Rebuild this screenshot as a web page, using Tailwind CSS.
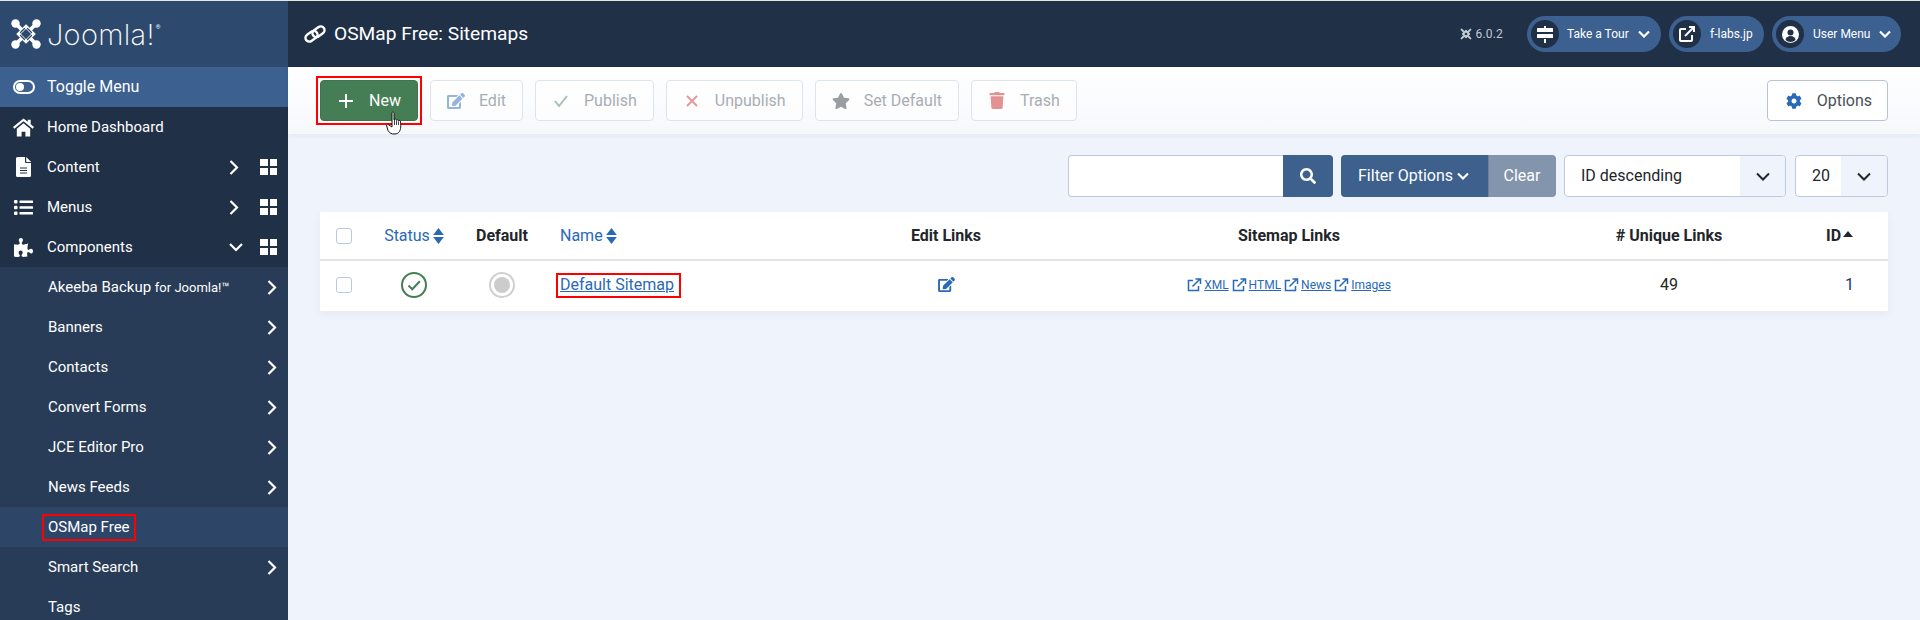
<!DOCTYPE html>
<html lang="en">
 <head>
  <meta charset="utf-8"/>
  <title>OSMap Free: Sitemaps</title>
  <script src="https://cdn.jsdelivr.net/npm/@tailwindcss/browser@4"></script>
 </head>
 <body class="font-[Roboto] bg-[#eff4fc] text-[#22262a] text-base overflow-hidden">
  <div class="h-px bg-[#e6e6dc]"></div>
  <div class="flex h-[619px] overflow-hidden">
   <!-- sidebar -->
   <aside class="w-[288px] shrink-0 flex flex-col bg-[#1f3047] text-white text-[15px] overflow-hidden">
    <div class="h-[66px] shrink-0 bg-[#2d4a6e] flex items-center pl-[11px] gap-[6px]">
     <svg class="w-[30px] h-[30px]" viewBox="0 0 30 30" fill="none" stroke-linecap="round">
      <path d="M15 7.500 22.500 15 15 22.500 7.500 15z" stroke="#fff" stroke-width="3.200"/>
      <g stroke="#fff" stroke-width="3.600"><path d="M5 5 11 11M25 5 19 11M5 25 11 19M25 25 19 19"/></g>
      <g stroke="#2d4a6e" stroke-width="1.300"><path d="M9.500 13.500 13.500 9.500M16.500 20.500 20.500 16.500M16.500 9.500 20.500 13.500M9.500 16.500 13.500 20.500"/></g>
      <g fill="#fff"><circle cx="4.500" cy="4.500" r="4.200"/><circle cx="25.500" cy="4.500" r="4.200"/><circle cx="4.500" cy="25.500" r="4.200"/><circle cx="25.500" cy="25.500" r="4.200"/></g>
     </svg>
     <span class="font-[Inter] font-extralight text-[29px] tracking-[0.3px] leading-none">Joomla!</span>
     <span class="text-[6px] -mt-4 -ml-[5px]">®</span>
    </div>
    <div class="h-10 shrink-0 bg-[#3c6090] flex items-center pl-[13px] text-base">
     <svg class="w-[22px] h-[14px]" viewBox="0 0 22 14"><rect x="1" y="1" width="20" height="12" rx="6" fill="none" stroke="#fff" stroke-width="2"/><circle cx="7" cy="7" r="4" fill="#fff"/></svg>
     <span class="ml-3">Toggle Menu</span>
    </div>
    <div class="h-10 shrink-0 flex items-center pl-[13px]">
     <svg class="w-[21px] h-[19px]" viewBox="0 0 22 19" fill="#fff"><path d="M11 0 0 9l1.400 1.800L11 3l9.600 7.800L22 9l-3.500-2.900V1.500h-3v2.100z"/><path d="M11 5 4 10.700V19h5v-5h4v5h5v-8.300z"/></svg>
     <span class="ml-[13px]">Home Dashboard</span>
    </div>
    <div class="h-10 shrink-0 flex items-center pl-[16px]">
     <svg class="w-[15px] h-[20px]" viewBox="0 0 15 20"><path d="M2 0h7v5a1 1 0 0 0 1 1h5v12.500a1.500 1.500 0 0 1-1.500 1.500h-12A1.500 1.500 0 0 1 0 18.500v-17A1.500 1.500 0 0 1 1.500 0zM10.200 0 15 4.800V5h-4.800z" fill="#fff"/><path d="M4 11h7M4 13.500h7M4 16h7" stroke="#1f3047" stroke-width="1"/></svg>
     <span class="ml-[16px]">Content</span>
     <svg class="w-[10px] h-[15px] ml-auto" viewBox="0 0 10 15" fill="none" stroke="#fff" stroke-width="2.200"><path d="M1.500 1l6.500 6.500-6.500 6.500"/></svg>
     <div class="grid grid-cols-2 gap-[2px] w-[17px] ml-[21px] mr-[11px]"><i class="h-[7px] bg-white"></i><i class="h-[7px] bg-white"></i><i class="h-[7px] bg-white"></i><i class="h-[7px] bg-white"></i></div>
    </div>
    <div class="h-10 shrink-0 flex items-center pl-[14px]">
     <svg class="w-[19px] h-[15px]" viewBox="0 0 19 15" fill="#fff"><rect x="0" y="0" width="3.500" height="3.500" rx="1"/><rect x="0" y="5.700" width="3.500" height="3.500" rx="1"/><rect x="0" y="11.400" width="3.500" height="3.500" rx="1"/><rect x="5.500" y="0.500" width="13.500" height="2.500" rx=".5"/><rect x="5.500" y="6.200" width="13.500" height="2.500" rx=".5"/><rect x="5.500" y="11.900" width="13.500" height="2.500" rx=".5"/></svg>
     <span class="ml-[14px]">Menus</span>
     <svg class="w-[10px] h-[15px] ml-auto" viewBox="0 0 10 15" fill="none" stroke="#fff" stroke-width="2.200"><path d="M1.500 1l6.500 6.500-6.500 6.500"/></svg>
     <div class="grid grid-cols-2 gap-[2px] w-[17px] ml-[21px] mr-[11px]"><i class="h-[7px] bg-white"></i><i class="h-[7px] bg-white"></i><i class="h-[7px] bg-white"></i><i class="h-[7px] bg-white"></i></div>
    </div>
    <div class="h-10 shrink-0 flex items-center pl-[14px]">
     <svg class="w-[19px] h-[19px]" viewBox="0 0 576 512" preserveAspectRatio="none" fill="#fff"><path d="M519.442 288.651c-41.519 0-59.5 31.593-82.058 31.593C377.409 320.244 432 144 432 144s-196.288 80-196.288-3.297c0-35.827 36.288-46.25 36.288-85.985C272 19.216 243.885 0 210.539 0c-34.654 0-66.366 18.891-66.366 56.346 0 41.364 31.711 59.277 31.711 81.75C175.885 207.719 0 166.758 0 166.758v333.237s178.635 41.047 178.635-28.662c0-22.473-40-40.107-40-81.471 0-37.456 29.25-56.346 63.577-56.346 33.673 0 61.788 19.216 61.788 54.717 0 39.735-36.288 50.158-36.288 85.985 0 60.803 129.675 25.73 181.23 25.73 0 0-34.725-120.101 25.827-120.101 35.962 0 46.423 36.152 86.308 36.152C556.712 416 576 387.99 576 354.443c0-34.199-18.962-65.792-56.558-65.792z"/></svg>
     <span class="ml-[14px]">Components</span>
     <svg class="w-[14px] h-[10px] ml-auto" viewBox="0 0 14 10" fill="none" stroke="#fff" stroke-width="2.200"><path d="M1 2l6 6 6-6"/></svg>
     <div class="grid grid-cols-2 gap-[2px] w-[17px] ml-[17px] mr-[11px]"><i class="h-[7px] bg-white"></i><i class="h-[7px] bg-white"></i><i class="h-[7px] bg-white"></i><i class="h-[7px] bg-white"></i></div>
    </div>
    <!-- submenu -->
    <div class="flex-1 bg-[#283c57] flex flex-col">
     <div class="h-10 shrink-0 flex items-center pl-[48px] pr-[11px]"><span>Akeeba Backup <span class="text-[13px]">for Joomla!™</span></span><svg class="w-[10px] h-[15px] ml-auto" viewBox="0 0 10 15" fill="none" stroke="#fff" stroke-width="2.200"><path d="M1.500 1l6.500 6.500-6.500 6.500"/></svg></div>
     <div class="h-10 shrink-0 flex items-center pl-[48px] pr-[11px]"><span>Banners</span><svg class="w-[10px] h-[15px] ml-auto" viewBox="0 0 10 15" fill="none" stroke="#fff" stroke-width="2.200"><path d="M1.500 1l6.500 6.500-6.500 6.500"/></svg></div>
     <div class="h-10 shrink-0 flex items-center pl-[48px] pr-[11px]"><span>Contacts</span><svg class="w-[10px] h-[15px] ml-auto" viewBox="0 0 10 15" fill="none" stroke="#fff" stroke-width="2.200"><path d="M1.500 1l6.500 6.500-6.500 6.500"/></svg></div>
     <div class="h-10 shrink-0 flex items-center pl-[48px] pr-[11px]"><span>Convert Forms</span><svg class="w-[10px] h-[15px] ml-auto" viewBox="0 0 10 15" fill="none" stroke="#fff" stroke-width="2.200"><path d="M1.500 1l6.500 6.500-6.500 6.500"/></svg></div>
     <div class="h-10 shrink-0 flex items-center pl-[48px] pr-[11px]"><span>JCE Editor Pro</span><svg class="w-[10px] h-[15px] ml-auto" viewBox="0 0 10 15" fill="none" stroke="#fff" stroke-width="2.200"><path d="M1.500 1l6.500 6.500-6.500 6.500"/></svg></div>
     <div class="h-10 shrink-0 flex items-center pl-[48px] pr-[11px]"><span>News Feeds</span><svg class="w-[10px] h-[15px] ml-auto" viewBox="0 0 10 15" fill="none" stroke="#fff" stroke-width="2.200"><path d="M1.500 1l6.500 6.500-6.500 6.500"/></svg></div>
     <div class="h-10 shrink-0 flex items-center pl-[42px] bg-[#2d4668]"><span class="border-2 border-[#f00] h-[27px] w-[94px] pl-[4px] flex items-center whitespace-nowrap">OSMap Free</span></div>
     <div class="h-10 shrink-0 flex items-center pl-[48px] pr-[11px]"><span>Smart Search</span><svg class="w-[10px] h-[15px] ml-auto" viewBox="0 0 10 15" fill="none" stroke="#fff" stroke-width="2.200"><path d="M1.500 1l6.500 6.500-6.500 6.500"/></svg></div>
     <div class="h-10 shrink-0 flex items-center pl-[48px]"><span>Tags</span></div>
    </div>
   </aside>

   <main class="flex-1 flex flex-col min-w-0">
    <!-- header -->
    <header class="h-[66px] shrink-0 bg-[#1f3047] text-white flex items-center pl-[16px] pr-[19px]">
     <svg class="w-[22px] h-[18px]" viewBox="0 0 22 18" fill="none" stroke="#fff" stroke-width="2.400">
      <rect x="1" y="7.500" width="13" height="7.500" rx="3.750" transform="rotate(-35 7.500 11.250)"/>
      <rect x="8" y="3" width="13" height="7.500" rx="3.750" transform="rotate(-35 14.500 6.750)"/>
     </svg>
     <h1 class="ml-[8px] text-[19.2px] leading-none">OSMap Free: Sitemaps</h1>
     <div class="ml-auto flex items-center text-xs text-[#c3cad4]">
      <svg class="w-[12px] h-[12px] mr-[3px]" viewBox="0 0 30 30" fill="none" stroke="#c3cad4" stroke-width="5" stroke-linecap="round"><path d="M15 7.500 22.500 15 15 22.500 7.500 15zM4 4 11 11M26 4 19 11M4 26 11 19M26 26 19 19"/></svg>
      <span class="tracking-[0.2px]">6.0.2</span>
     </div>
     <div class="ml-[24px] h-9 w-[134px] rounded-full bg-[#3c6090] flex items-center pl-[4px] text-xs">
      <span class="w-7 h-7 rounded-full bg-[#1f3047] flex items-center justify-center">
       <svg class="w-[16px] h-[17px]" viewBox="0 0 16 17" fill="#fff"><rect x="0" y="2" width="16" height="4" rx=".5"/><rect x="0" y="8" width="16" height="4" rx=".5"/><rect x="7" y="0" width="2" height="2"/><rect x="7" y="13" width="2" height="4"/></svg>
      </span>
      <span class="ml-[8px]">Take a Tour</span>
      <svg class="w-[12px] h-[8px] ml-[9px]" viewBox="0 0 12 8" fill="none" stroke="#fff" stroke-width="2.200"><path d="M1 1.500l5 5 5-5"/></svg>
     </div>
     <div class="ml-[8px] h-9 w-[95px] rounded-full bg-[#3c6090] flex items-center pl-[4px] text-xs">
      <span class="w-7 h-7 rounded-full bg-[#1f3047] flex items-center justify-center">
       <svg class="w-[16px] h-[16px]" viewBox="0 0 16 16" fill="none" stroke="#fff" stroke-width="2"><path d="M7 3H2a1 1 0 0 0-1 1v10a1 1 0 0 0 1 1h10a1 1 0 0 0 1-1V9"/><path d="M6 10 14.500 1.500"/><path d="M10 1h5v5" stroke-width="2"/></svg>
      </span>
      <span class="ml-[9px]">f-labs.jp</span>
     </div>
     <div class="ml-[8px] h-9 w-[129px] rounded-full bg-[#3c6090] flex items-center pl-[4px] text-xs">
      <span class="w-7 h-7 rounded-full bg-[#1f3047] flex items-center justify-center">
       <svg class="w-[17px] h-[17px]" viewBox="0 0 17 17"><circle cx="8.500" cy="8.500" r="8.500" fill="#fff"/><circle cx="8.500" cy="6.500" r="3" fill="#1f3047"/><path d="M3.500 14a5 4 0 0 1 10 0 7 7 0 0 1-10 0z" fill="#1f3047"/></svg>
      </span>
      <span class="ml-[9px]">User Menu</span>
      <svg class="w-[12px] h-[8px] ml-[9px]" viewBox="0 0 12 8" fill="none" stroke="#fff" stroke-width="2.200"><path d="M1 1.500l5 5 5-5"/></svg>
     </div>
    </header>

    <!-- toolbar -->
    <div class="h-[67px] shrink-0 bg-gradient-to-b from-white to-[#f6f8fc] shadow-[0_2px_4px_rgba(31,48,71,0.06)] flex items-center gap-[12px] pl-[32px] pr-[32px] relative">
     <div class="relative">
      <div class="-m-[4px] p-[2px] border-2 border-[#f00]">
       <button class="h-[41px] rounded-[4px] bg-[#457d54] border border-[#3f734d] text-white flex items-center gap-[14px] px-[16px]">
        <svg class="w-[18px] h-[18px]" viewBox="0 0 18 18" fill="none" stroke="#fff" stroke-width="2"><path d="M9 2v14M2 9h14"/></svg>
        <span>New</span>
       </button>
      </div>
      <!-- mouse pointer -->
      <svg class="absolute left-[66px] top-[31px] w-[18px] h-[24px]" viewBox="0 0 18 24" fill="#fff" stroke="#111" stroke-width="1" stroke-linejoin="round"><path d="M6 1.500c.8-.8 2-.5 2 1V9l.5-.5c.8-.8 2-.3 2 .7.500-.8 2-.5 2 .6.500-.7 2-.3 2 .8.200 3 .5 5 0 7-.500 2.500-1.500 5-5.500 5.400-3.500.3-5.500-1-7-3.500L.7 15c-.6-1 .4-2.200 1.500-1.500L6 16z"/><path d="M8.500 9v5M10.500 9.500v4.500M12.500 10.500v3.500" stroke-width=".8"/></svg>
     </div>
     <button class="h-[41px] rounded-[4px] bg-white/60 border border-[#dfe4ec] text-[#a9adb3] flex items-center gap-[14px] px-[16px]">
      <svg class="w-[18px] h-[16px]" viewBox="0 0 576 512" fill="#94b4de"><path d="M402.600 83.200l90.200 90.200c3.800 3.800 3.800 10 0 13.800L274.400 405.600l-92.800 10.300c-12.400 1.400-22.900-9.100-21.500-21.500l10.300-92.800L388.800 83.200c3.800-3.800 10-3.800 13.800 0zm162-22.900l-48.800-48.800c-15.200-15.200-39.900-15.200-55.200 0l-35.400 35.400c-3.800 3.800-3.800 10 0 13.800l90.200 90.200c3.800 3.800 10 3.800 13.800 0l35.400-35.400c15.200-15.300 15.200-40 0-55.200zM384 346.200V448H64V128h229.800c3.200 0 6.200-1.300 8.500-3.500l40-40c7.600-7.600 2.200-20.500-8.500-20.500H48C21.500 64 0 85.500 0 112v352c0 26.500 21.500 48 48 48h352c26.500 0 48-21.500 48-48V306.200c0-10.700-12.900-16-20.500-8.500l-40 40c-2.200 2.300-3.500 5.300-3.500 8.500z"/></svg>
      <span>Edit</span>
     </button>
     <button class="h-[41px] rounded-[4px] bg-white/60 border border-[#dfe4ec] text-[#a9adb3] flex items-center gap-[14px] px-[16px]">
      <svg class="w-[18px] h-[14px]" viewBox="0 0 18 14" fill="none" stroke="#a5c2ad" stroke-width="2"><path d="M3 7l4 5 8-10"/></svg>
      <span>Publish</span>
     </button>
     <button class="h-[41px] rounded-[4px] bg-white/60 border border-[#dfe4ec] text-[#a9adb3] flex items-center gap-[14px] px-[16px]">
      <svg class="w-[18px] h-[14px]" viewBox="0 0 18 14" fill="none" stroke="#e29a9a" stroke-width="2"><path d="M4 2l10 10M14 2 4 12"/></svg>
      <span>Unpublish</span>
     </button>
     <button class="h-[41px] rounded-[4px] bg-white/60 border border-[#dfe4ec] text-[#a9adb3] flex items-center gap-[14px] px-[16px]">
      <svg class="w-[18px] h-[16px]" viewBox="0 0 576 512" fill="#9a9da1"><path d="M259.300 17.800L194 150.200 47.900 171.500c-26.200 3.800-36.700 36.100-17.700 54.600l105.700 103-25 145.500c-4.500 26.300 23.200 46 46.400 33.700L288 439.600l130.700 68.700c23.200 12.200 50.900-7.400 46.400-33.700l-25-145.500 105.700-103c19-18.500 8.500-50.800-17.700-54.600L382 150.200 316.700 17.800c-11.700-23.600-45.600-23.900-57.400 0z"/></svg>
      <span>Set Default</span>
     </button>
     <button class="h-[41px] rounded-[4px] bg-white/60 border border-[#dfe4ec] text-[#a9adb3] flex items-center gap-[14px] px-[16px]">
      <svg class="w-[18px] h-[17px]" viewBox="0 0 448 512" fill="#e29292"><path d="M432 32H312l-9.400-18.700A24 24 0 0 0 281.100 0H166.800a23.720 23.720 0 0 0-21.400 13.300L136 32H16A16 16 0 0 0 0 48v32a16 16 0 0 0 16 16h416a16 16 0 0 0 16-16V48a16 16 0 0 0-16-16zM53.200 467a48 48 0 0 0 47.900 45h245.800a48 48 0 0 0 47.900-45L416 128H32z"/></svg>
      <span>Trash</span>
     </button>
     <button class="ml-auto h-[41px] rounded-[4px] bg-white border border-[#b9c3d3] text-[#495057] flex items-center gap-[14px] pl-[17px] pr-[15px]">
      <svg class="w-[18px] h-[16px]" viewBox="0 0 512 512" fill="#2a69b8"><path d="M487.400 315.700l-42.600-24.600c4.300-23.200 4.300-47 0-70.200l42.600-24.600c4.900-2.800 7.100-8.600 5.500-14-11.100-35.600-30-67.800-54.700-94.600-3.800-4.100-10-5.100-14.800-2.300L380.800 110c-17.900-15.400-38.500-27.300-60.800-35.100V25.800c0-5.600-3.900-10.500-9.400-11.700-36.700-8.200-74.300-7.800-109.200 0-5.500 1.200-9.400 6.100-9.400 11.700V75c-22.200 7.900-42.800 19.800-60.800 35.100L88.700 85.500c-4.900-2.800-11-1.900-14.800 2.300-24.700 26.700-43.600 58.900-54.700 94.600-1.700 5.400.6 11.200 5.500 14L67.300 221c-4.300 23.200-4.300 47 0 70.200l-42.600 24.600c-4.900 2.800-7.100 8.600-5.500 14 11.100 35.600 30 67.800 54.700 94.600 3.800 4.100 10 5.100 14.800 2.300l42.600-24.600c17.900 15.400 38.500 27.300 60.800 35.100v49.200c0 5.600 3.900 10.500 9.400 11.700 36.700 8.200 74.300 7.800 109.200 0 5.500-1.200 9.400-6.100 9.400-11.700v-49.200c22.200-7.900 42.800-19.800 60.800-35.100l42.600 24.600c4.900 2.800 11 1.900 14.800-2.300 24.700-26.700 43.600-58.900 54.700-94.600 1.500-5.500-.7-11.300-5.600-14.100zM256 336c-44.100 0-80-35.900-80-80s35.900-80 80-80 80 35.900 80 80-35.900 80-80 80z"/></svg>
      <span>Options</span>
     </button>
    </div>

    <!-- filters -->
    <div class="flex justify-end items-stretch h-[42px] mt-[21px] mr-[32px]">
     <div class="w-[215px] bg-white border border-[#bcc9e0] border-r-0 rounded-l-[4px]"></div>
     <div class="w-[50px] bg-[#3e608c] rounded-r-[4px] flex items-center justify-center">
      <svg class="w-[16px] h-[16px]" viewBox="0 0 512 512" fill="#fff"><path d="M505 442.700L405.300 343c-4.500-4.500-10.600-7-17-7H372c27.600-35.300 44-79.700 44-128C416 93.100 322.900 0 208 0S0 93.100 0 208s93.100 208 208 208c48.300 0 92.700-16.400 128-44v16.300c0 6.400 2.500 12.500 7 17l99.700 99.700c9.400 9.400 24.600 9.400 33.900 0l28.300-28.300c9.400-9.400 9.400-24.600.1-34zM208 336c-70.700 0-128-57.200-128-128 0-70.700 57.200-128 128-128 70.700 0 128 57.200 128 128 0 70.700-57.200 128-128 128z"/></svg>
     </div>
     <div class="ml-[8px] w-[147px] bg-[#3e608c] rounded-l-[4px] text-white flex items-center pl-[17px]">
      <span>Filter Options</span>
      <svg class="w-[12px] h-[8px] ml-[4px]" viewBox="0 0 12 8" fill="none" stroke="#fff" stroke-width="2.200"><path d="M1 1.500l5 5 5-5"/></svg>
     </div>
     <div class="w-[68px] bg-[#8394ad] border-l border-[#6f819c] rounded-r-[4px] text-white flex items-center justify-center pr-[1px]">Clear</div>
     <div class="ml-[8px] w-[222px] bg-white border border-[#bcc9e0] rounded-[4px] flex overflow-hidden">
      <span class="flex-1 pl-[16px] flex items-center text-[#22262a]">ID descending</span>
      <span class="w-[45px] bg-[#eff4fc] flex items-center justify-center">
       <svg class="w-[14px] h-[9px]" viewBox="0 0 14 9" fill="none" stroke="#22262a" stroke-width="2"><path d="M1 1.500l6 6 6-6"/></svg>
      </span>
     </div>
     <div class="ml-[9px] w-[93px] bg-white border border-[#bcc9e0] rounded-[4px] flex overflow-hidden">
      <span class="flex-1 pl-[16px] flex items-center text-[#22262a]">20</span>
      <span class="w-[46px] bg-[#eff4fc] flex items-center justify-center">
       <svg class="w-[14px] h-[9px]" viewBox="0 0 14 9" fill="none" stroke="#22262a" stroke-width="2"><path d="M1 1.500l6 6 6-6"/></svg>
      </span>
     </div>
    </div>

    <!-- table -->
    <div class="mt-[15px] mx-[32px] bg-white shadow-[0_4px_8px_rgba(31,48,71,0.05)]">
     <div class="h-[49px] grid grid-cols-[49px_90px_86px_287px_228px_458px_302px_68px] items-center font-bold border-b-2 border-[#e2e5ea]">
      <div class="pl-[16px]"><div class="w-[16px] h-[16px] rounded-[3px] border border-[#bcc9e0] bg-white"></div></div>
      <div class="flex justify-center items-center gap-[3px] text-[#2a69b8] font-normal">Status
       <svg class="w-[11px] h-[16px]" viewBox="0 0 10 15" fill="#2a69b8"><path d="M5 0 10 6.500H0zM5 15 0 8.500h10z"/></svg>
      </div>
      <div class="text-center">Default</div>
      <div class="pl-[15px] flex items-center gap-[3px] text-[#2a69b8] font-normal">Name
       <svg class="w-[11px] h-[16px]" viewBox="0 0 10 15" fill="#2a69b8"><path d="M5 0 10 6.500H0zM5 15 0 8.500h10z"/></svg>
      </div>
      <div class="text-center">Edit Links</div>
      <div class="text-center">Sitemap Links</div>
      <div class="text-center"># Unique Links</div>
      <div class="pl-[6px] flex items-center gap-[2px]">ID
       <svg class="w-[10px] h-[6px] -mt-[3px]" viewBox="0 0 10 6" fill="#22262a"><path d="M5 0 10 6H0z"/></svg>
      </div>
     </div>
     <div class="h-[50px] pb-[2px] grid grid-cols-[49px_90px_86px_287px_228px_458px_302px_68px] items-center">
      <div class="pl-[16px]"><div class="w-[16px] h-[16px] rounded-[3px] border border-[#bcc9e0] bg-white"></div></div>
      <div class="flex justify-center">
       <svg class="w-[26px] h-[26px]" viewBox="0 0 26 26" fill="none" stroke="#457d54" stroke-width="2"><circle cx="13" cy="13" r="12"/><path d="M7.500 13.500l3.800 3.800 7.500-8"/></svg>
      </div>
      <div class="flex justify-center">
       <div class="w-[26px] h-[26px] rounded-full border-2 border-[#cfcfcf] flex items-center justify-center"><div class="w-[16px] h-[16px] rounded-full bg-[#cccccc]"></div></div>
      </div>
      <div class="pl-[11px]">
       <a class="inline-block border-2 border-[#f00] h-[25px] w-[125px] pl-[2px] leading-[20px] text-[#2a69b8] underline" href="#">Default Sitemap</a>
      </div>
      <div class="flex justify-center">
       <svg class="w-[17px] h-[15px] -mt-[2px]" viewBox="0 0 576 512" fill="#2a69b8"><path d="M402.600 83.200l90.200 90.200c3.800 3.800 3.800 10 0 13.800L274.400 405.600l-92.800 10.300c-12.400 1.400-22.900-9.100-21.500-21.500l10.300-92.800L388.800 83.200c3.800-3.800 10-3.800 13.800 0zm162-22.900l-48.800-48.800c-15.200-15.200-39.900-15.200-55.200 0l-35.400 35.400c-3.800 3.800-3.800 10 0 13.800l90.200 90.200c3.800 3.800 10 3.800 13.800 0l35.400-35.400c15.200-15.300 15.200-40 0-55.200zM384 346.200V448H64V128h229.800c3.200 0 6.200-1.300 8.500-3.500l40-40c7.600-7.600 2.200-20.500-8.500-20.500H48C21.500 64 0 85.500 0 112v352c0 26.500 21.500 48 48 48h352c26.500 0 48-21.500 48-48V306.200c0-10.700-12.900-16-20.500-8.500l-40 40c-2.200 2.300-3.500 5.300-3.500 8.500z"/></svg>
      </div>
      <div class="flex justify-center items-center gap-[2px] text-xs text-[#2a69b8]">
       <svg class="w-[15px] h-[14px]" viewBox="0 0 15 14" fill="none" stroke="#2a69b8" stroke-width="1.500"><path d="M6 2.500H1.500v10h10V8"/><path d="M5.500 8.500 12.500 1.500M8.500 1h5v5"/></svg>
       <a class="underline" href="#">XML</a>
       <svg class="w-[15px] h-[14px] ml-[1px]" viewBox="0 0 15 14" fill="none" stroke="#2a69b8" stroke-width="1.500"><path d="M6 2.500H1.500v10h10V8"/><path d="M5.500 8.500 12.500 1.500M8.500 1h5v5"/></svg>
       <a class="underline" href="#">HTML</a>
       <svg class="w-[15px] h-[14px] ml-[1px]" viewBox="0 0 15 14" fill="none" stroke="#2a69b8" stroke-width="1.500"><path d="M6 2.500H1.500v10h10V8"/><path d="M5.500 8.500 12.500 1.500M8.500 1h5v5"/></svg>
       <a class="underline" href="#">News</a>
       <svg class="w-[15px] h-[14px] ml-[1px]" viewBox="0 0 15 14" fill="none" stroke="#2a69b8" stroke-width="1.500"><path d="M6 2.500H1.500v10h10V8"/><path d="M5.500 8.500 12.500 1.500M8.500 1h5v5"/></svg>
       <a class="underline" href="#">Images</a>
      </div>
      <div class="text-center">49</div>
      <div class="pl-[25px] text-[#1f3a68]">1</div>
     </div>
    </div>
   </main>
  </div>
 </body>
</html>
